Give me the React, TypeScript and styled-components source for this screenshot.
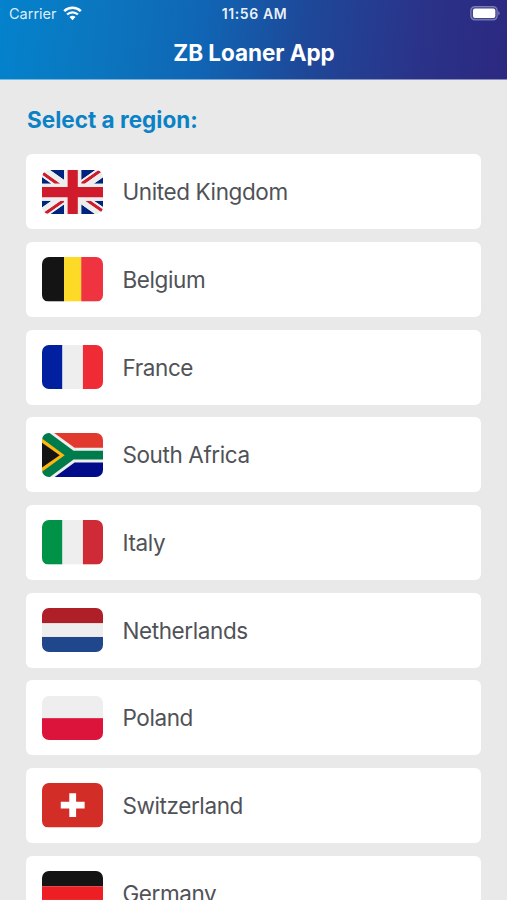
import React from 'react';
import styled, { createGlobalStyle } from 'styled-components';

const GlobalStyle = createGlobalStyle`
  * { box-sizing: border-box; }
  body {
    margin: 0;
    background: #e9e9e9;
    font-family: Inter, Roboto, sans-serif;
  }
`;

const Screen = styled.div`
  width: 507px;
  height: 900px;
  overflow: hidden;
  background: #e9e9e9;
`;

const Header = styled.header`
  height: 79.5px;
  color: #fff;
  background: linear-gradient(96deg, #0482cc 0%, #0b76bf 20%, #1065b4 40%, #1e4899 60%, #2a3389 82%, #2c2880 100%);
  border-bottom: 1px solid rgba(255, 255, 255, 0.45);
`;

const StatusBar = styled.div`
  display: grid;
  grid-template-columns: 1fr auto 1fr;
  align-items: center;
  height: 27px;
  padding: 0 7px 0 9px;
`;

const Carrier = styled.div`
  display: flex;
  align-items: center;
  gap: 6px;
  padding-top: 1px;
  font-size: 14.5px;
  line-height: 18px;
  color: rgba(255, 255, 255, 0.88);
`;

const Wifi = styled.svg`
  margin-bottom: 2px;
`;

const Clock = styled.div`
  padding-top: 1px;
  font-size: 14px;
  font-weight: 600;
  line-height: 18px;
  letter-spacing: 0.6px;
  color: rgba(255, 255, 255, 0.93);
`;

const Battery = styled.svg`
  justify-self: end;
`;

const Title = styled.h1`
  margin: 12px 0 0;
  padding-left: 1px;
  text-align: center;
  font-size: 22.5px;
  line-height: 28px;
  font-weight: 700;
  letter-spacing: -0.05px;
`;

const Content = styled.main`
  padding: 25.5px 26px 0;
`;

const Prompt = styled.h2`
  margin: 0 0 19.3px;
  padding-left: 1px;
  font-size: 22.5px;
  line-height: 30px;
  font-weight: 700;
  letter-spacing: 0.02px;
  color: #0b82c6;
`;

const RegionList = styled.ul`
  display: flex;
  flex-direction: column;
  gap: 12.7px;
  margin: 0;
  padding: 0;
  list-style: none;
`;

const RegionCard = styled.li`
  display: flex;
  align-items: center;
  gap: 19.4px;
  height: 75px;
  padding: 0 15.7px;
  border-radius: 6px;
  background: #fff;
`;

const RegionName = styled.span`
  padding-top: 1px;
  font-size: 22.5px;
  line-height: 30px;
  letter-spacing: -0.4px;
  color: #505257;
  white-space: nowrap;
`;

const FlagFrame = styled.svg`
  display: block;
  flex: none;
  width: 61.4px;
  height: 44.3px;
  border-radius: 7px;
`;

type Stripe = [color: string, size: number];

const columns = (stripes: Stripe[]) => {
  let x = 0;
  return stripes.map(([color, size]) => {
    const el = <rect key={x} x={x} y={5} width={size} height={26} fill={color} />;
    x += size;
    return el;
  });
};

const bands = (stripes: Stripe[]) => {
  let y = 5;
  return stripes.map(([color, size]) => {
    const el = <rect key={y} x={0} y={y} width={36} height={size} fill={color} />;
    y += size;
    return el;
  });
};

const unitedKingdom = (
  <>
    <path fill="#00247D" d="M0 9.059V13h5.628zM4.664 31H13v-5.837zM23 25.164V31h8.335zM0 23v3.941L5.63 23zM31.337 5H23v5.837zM36 26.942V23h-5.631zM36 13V9.059L30.371 13zM13 5H4.664L13 10.837z" />
    <path fill="#CF1B2B" d="M25.14 23l9.712 6.801c.471-.479.808-1.082.99-1.749L28.627 23H25.14zM13 23h-2.141l-9.711 6.8c.521.53 1.189.909 1.938 1.085L13 23.943V23zm10-10h2.141l9.711-6.8c-.521-.53-1.188-.909-1.937-1.085L23 12.057V13zm-12.141 0L1.148 6.2C.677 6.68.34 7.282.157 7.949L7.372 13h3.487z" />
    <path fill="#EEE" d="M36 21H21v10h2v-5.836L31.335 31H32c1.117 0 2.126-.461 2.852-1.199L25.14 23h3.487l7.215 5.052c.093-.337.158-.686.158-1.052v-.058L30.369 23H36v-2zM0 21v2h5.63L0 26.941V27c0 1.091.439 2.078 1.148 2.8l9.711-6.8H13v.943l-9.914 6.941c.294.07.598.116.914.116h.664L13 25.163V31h2V21H0zM36 9c0-1.091-.439-2.078-1.148-2.8L25.141 13H23v-.943l9.915-6.942C32.62 5.046 32.316 5 32 5h-.663L23 10.837V5h-2v10h15v-2h-5.629L36 9.059V9zM13 5v5.837L4.664 5H4c-1.118 0-2.126.461-2.852 1.2l9.711 6.8H7.372L.157 7.949C.065 8.286 0 8.634 0 9v.059L5.628 13H0v2h15V5h-2z" />
    <path fill="#CF1B2B" d="M21 15V5h-6v10H0v6h15v10h6V21h15v-6z" />
  </>
);

const southAfrica = (
  <>
    <path fill="#EEE" d="M0 5h36v26H0z" />
    <path fill="#E1392D" d="M7.2 5H36v8.7H19.1z" />
    <path fill="#000C8A" d="M7.2 31H36v-8.7H19.1z" />
    <path fill="#007C4C" d="M0 5h4.4l14.1 10.4H36v5.2H18.5L4.4 31H0z" />
    <path fill="#FFB611" d="M0 8.3 13.3 18 0 27.7z" />
    <path fill="#141414" d="M0 10.7 10.4 18 0 25.3z" />
  </>
);

const switzerland = (
  <>
    <path fill="#D32D27" d="M0 5h36v26H0z" />
    <path fill="#FFF" d="M25 16h-5v-5h-4v5h-5v4h5v5h4v-5h5z" />
  </>
);

interface Region {
  name: string;
  flag: React.ReactNode;
}

const regions: Region[] = [
  { name: 'United Kingdom', flag: unitedKingdom },
  { name: 'Belgium', flag: columns([['#141414', 13], ['#FDDA25', 10], ['#EF3340', 13]]) },
  { name: 'France', flag: columns([['#00209F', 12], ['#EEEEEE', 12], ['#EF2B36', 12]]) },
  { name: 'South Africa', flag: southAfrica },
  { name: 'Italy', flag: columns([['#009246', 12], ['#EEEEEE', 12], ['#CE2B37', 12]]) },
  { name: 'Netherlands', flag: bands([['#AE1F28', 9], ['#EEEEEE', 8], ['#20478B', 9]]) },
  { name: 'Poland', flag: bands([['#EEEEEE', 13], ['#DC143C', 13]]) },
  { name: 'Switzerland', flag: switzerland },
  { name: 'Germany', flag: bands([['#141414', 9], ['#ED1F24', 8], ['#FFCD05', 9]]) },
];

const WifiIcon = () => (
  <Wifi width="19" height="15" viewBox="0 0 19 15" fill="none" stroke="#fff">
    <path d="M1.2 5.1a12 12 0 0 1 16.6 0" strokeWidth="2.6" />
    <path d="M4.1 8.5a7.8 7.8 0 0 1 10.8 0" strokeWidth="2.4" />
    <path d="m9.5 14.3 3-3.2a4.2 4.2 0 0 0-6 0z" fill="#fff" stroke="none" />
  </Wifi>
);

const BatteryIcon = () => (
  <Battery width="30" height="15" viewBox="0 0 30 15">
    <rect x="0.8" y="0.6" width="26.4" height="13.3" rx="4" fill="#fff" fillOpacity="0.12" stroke="#fff" strokeOpacity="0.35" strokeWidth="1.2" />
    <rect x="3" y="2.6" width="22.3" height="9.3" rx="2" fill="#fff" />
    <path d="M28.3 5c1.8.8 1.8 3.7 0 4.5z" fill="#fff" fillOpacity="0.4" />
  </Battery>
);

export default function App() {
  return (
    <Screen>
      <GlobalStyle />
      <Header>
        <StatusBar>
          <Carrier>
            Carrier
            <WifiIcon />
          </Carrier>
          <Clock>11:56 AM</Clock>
          <BatteryIcon />
        </StatusBar>
        <Title>ZB Loaner App</Title>
      </Header>
      <Content>
        <Prompt>Select a region:</Prompt>
        <RegionList>
          {regions.map(({ name, flag }) => (
            <RegionCard key={name}>
              <FlagFrame viewBox="0 5 36 26" preserveAspectRatio="none" aria-hidden="true">
                {flag}
              </FlagFrame>
              <RegionName>{name}</RegionName>
            </RegionCard>
          ))}
        </RegionList>
      </Content>
    </Screen>
  );
}
